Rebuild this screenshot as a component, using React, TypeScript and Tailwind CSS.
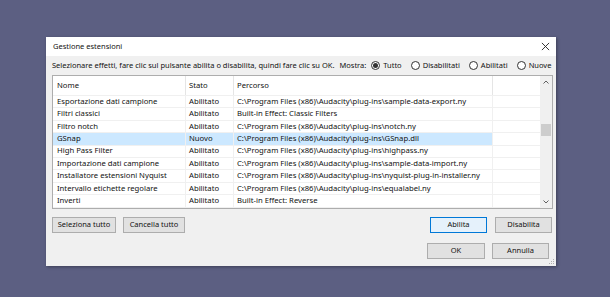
import React from 'react';

const rows = [
  { name: 'Esportazione dati campione', state: 'Abilitato', path: 'C:\\Program Files (x86)\\Audacity\\plug-ins\\sample-data-export.ny' },
  { name: 'Filtri classici', state: 'Abilitato', path: 'Built-in Effect: Classic Filters' },
  { name: 'Filtro notch', state: 'Abilitato', path: 'C:\\Program Files (x86)\\Audacity\\plug-ins\\notch.ny' },
  { name: 'GSnap', state: 'Nuovo', path: 'C:\\Program Files (x86)\\Audacity\\plug-ins\\GSnap.dll', selected: true },
  { name: 'High Pass Filter', state: 'Abilitato', path: 'C:\\Program Files (x86)\\Audacity\\plug-ins\\highpass.ny' },
  { name: 'Importazione dati campione', state: 'Abilitato', path: 'C:\\Program Files (x86)\\Audacity\\plug-ins\\sample-data-import.ny' },
  { name: 'Installatore estensioni Nyquist', state: 'Abilitato', path: 'C:\\Program Files (x86)\\Audacity\\plug-ins\\nyquist-plug-in-installer.ny' },
  { name: 'Intervallo etichette regolare', state: 'Abilitato', path: 'C:\\Program Files (x86)\\Audacity\\plug-ins\\equalabel.ny' },
  { name: 'Inverti', state: 'Abilitato', path: 'Built-in Effect: Reverse' },
];

function Radio({ label, checked }: { label: string; checked?: boolean }) {
  return (
    <label className="flex items-center gap-[3px]">
      <span className="w-[9px] h-[9px] rounded-full border border-[#333] bg-white flex items-center justify-center">
        {checked && <span className="w-[5px] h-[5px] rounded-full bg-[#333]" />}
      </span>
      <span>{label}</span>
    </label>
  );
}

function Btn({ children, w, primary }: { children: React.ReactNode; w: string; primary?: boolean }) {
  return (
    <button
      className={`${w} h-[16px] flex items-center justify-center border ${
        primary ? 'border-[#0078d7] bg-[#e5f1fb]' : 'border-[#adadad] bg-[#e1e1e1]'
      } text-[#111]`}
    >
      {children}
    </button>
  );
}

export default function App() {
  return (
    <div
      className="w-[610px] h-[297px] bg-[#5c5f82] pl-[46px] pt-[37px] overflow-hidden"
      style={{ fontFamily: '"Noto Sans", "Open Sans", sans-serif' }}
    >
      <div className="relative w-[510px] h-[229px] flex flex-col bg-[#f0f0f0] shadow-[1px_1px_3px_rgba(0,0,0,0.35)] text-[7.5px] text-[#111]">
        {/* title bar */}
        <div className="h-[19px] bg-white flex items-center justify-between pl-[7px] pr-[6px]">
          <span className="text-[7.5px]">Gestione estensioni</span>
          <svg width="9" height="9" viewBox="0 0 10 10">
            <path d="M1 1L9 9M9 1L1 9" stroke="#222" strokeWidth="1" />
          </svg>
        </div>

        <div className="flex-1 flex flex-col pl-[6px] pr-[3px]">
          {/* instructions + filter */}
          <div className="h-[19px] flex items-center">
            <span>Selezionare effetti, fare clic sul pulsante abilita o disabilita, quindi fare clic su OK.</span>
            <span className="ml-[5px] mr-[5px]">Mostra:</span>
            <div className="flex items-center gap-[9px]">
              <Radio label="Tutto" checked />
              <Radio label="Disabilitati" />
              <Radio label="Abilitati" />
              <Radio label="Nuove" />
            </div>
          </div>

          {/* list */}
          <div className="w-[501px] h-[134px] border border-[#adadad] bg-white flex text-[7.7px]">
            <div className="flex-1 flex flex-col">
              <div className="h-[20px] flex border-b border-[#f0f0f0]">
                <div className="w-[133px] pl-[4px] flex items-center border-r border-[#e5e5e5]">Nome</div>
                <div className="w-[48px] pl-[3px] flex items-center border-r border-[#e5e5e5]">Stato</div>
                <div className="w-[259px] pl-[3px] flex items-center border-r border-[#e5e5e5]">Percorso</div>
                <div className="flex-1" />
              </div>
              {rows.map((r) => (
                <div key={r.name} className="h-[12.4px] flex border-b border-[#f0f0f0]">
                  <div className={`w-[133px] pl-[4px] flex items-center border-r border-[#f0f0f0] whitespace-nowrap ${r.selected ? 'bg-[#cce8ff]' : ''}`}>{r.name}</div>
                  <div className={`w-[48px] pl-[3px] flex items-center border-r border-[#f0f0f0] ${r.selected ? 'bg-[#cce8ff]' : ''}`}>{r.state}</div>
                  <div className={`w-[259px] pl-[3px] flex items-center border-r border-[#f0f0f0] whitespace-nowrap overflow-hidden ${r.selected ? 'bg-[#cce8ff]' : ''}`}>{r.path}</div>
                  <div className="flex-1" />
                </div>
              ))}
            </div>
            {/* scrollbar */}
            <div className="w-[12px] bg-[#f0f0f0] flex flex-col items-center">
              <div className="h-[12px] flex items-center justify-center">
                <svg width="6" height="4" viewBox="0 0 6 4"><path d="M0.5 3.5L3 1L5.5 3.5" stroke="#606060" fill="none" /></svg>
              </div>
              <div className="h-[36px]" />
              <div className="w-[10px] h-[12px] bg-[#cdcdcd]" />
              <div className="flex-1" />
              <div className="h-[12px] flex items-center justify-center">
                <svg width="6" height="4" viewBox="0 0 6 4"><path d="M0.5 0.5L3 3L5.5 0.5" stroke="#606060" fill="none" /></svg>
              </div>
            </div>
          </div>

          {/* buttons */}
          <div className="mt-[8px] flex items-center">
            <Btn w="w-[64px]">Seleziona tutto</Btn>
            <div className="ml-[7px]"><Btn w="w-[62px]">Cancella tutto</Btn></div>
            <div className="ml-auto flex gap-[8px] mr-[1px]">
              <Btn w="w-[57px]" primary>Abilita</Btn>
              <Btn w="w-[57px]">Disabilita</Btn>
            </div>
          </div>
          <div className="mt-[10px] flex items-center justify-end gap-[7px] pr-[4px]">
            <Btn w="w-[58px]">OK</Btn>
            <Btn w="w-[57px]">Annulla</Btn>
          </div>
        </div>

        {/* resize grip */}
        <svg className="absolute right-[1px] bottom-[1px]" width="7" height="7" viewBox="0 0 7 7">
          <rect x="5" y="1" width="1" height="1" fill="#b0b0b0" />
          <rect x="3" y="3" width="1" height="1" fill="#b0b0b0" />
          <rect x="5" y="3" width="1" height="1" fill="#b0b0b0" />
          <rect x="1" y="5" width="1" height="1" fill="#b0b0b0" />
          <rect x="3" y="5" width="1" height="1" fill="#b0b0b0" />
          <rect x="5" y="5" width="1" height="1" fill="#b0b0b0" />
        </svg>
      </div>
    </div>
  );
}
